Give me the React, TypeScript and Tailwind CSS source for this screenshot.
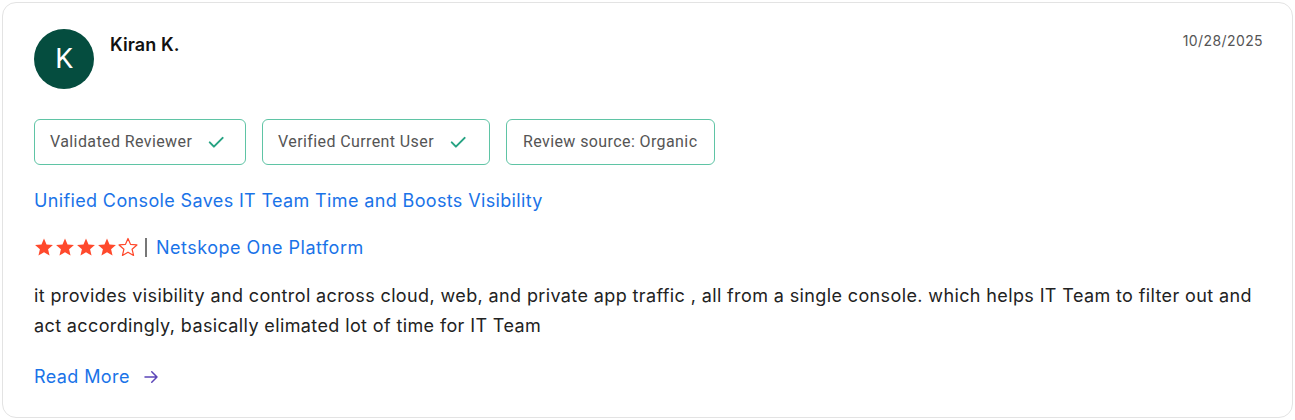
import React from "react";

const Check = () => (
  <svg width="20" height="20" viewBox="0 0 24 24" fill="none" stroke="#27a383" strokeWidth="2.4" strokeLinecap="round" strokeLinejoin="round">
    <path d="M4.5 12.5l5 5L20 7" />
  </svg>
);

const Star = ({ filled }: { filled: boolean }) => (
  <svg width="20" height="20" viewBox="0 0 24 24">
    <path
      d="M12 1.8l3.05 7.05 7.65.7-5.8 5.05 1.75 7.5L12 18.2l-6.65 3.9 1.75-7.5L1.3 9.55l7.65-.7z"
      fill={filled ? "#ff492c" : "none"}
      stroke="#ff492c"
      strokeWidth={filled ? 0 : 1.5}
      strokeLinejoin="round"
    />
  </svg>
);

export default function App() {
  return (
    <div className="w-[1295px] h-[420px] bg-white p-[2px] font-['Inter',sans-serif]">
      <div className="h-[416px] rounded-[14px] border border-[#e3e3e3] bg-white pl-[31px] pr-[29px] pt-[26px]">
        <div className="flex items-start justify-between">
          <div className="flex items-start gap-[16px]">
            <div className="w-[60px] h-[60px] rounded-full bg-[#054d3f] flex items-center justify-center text-white text-[28px] font-['Roboto',sans-serif]">
              K
            </div>
            <div className="pt-[2px] text-[18px] font-semibold text-[#111] tracking-[0.1px]">Kiran K.</div>
          </div>
          <div className="text-[14px] text-[#555] pt-[1px] tracking-[0.4px]">10/28/2025</div>
        </div>

        <div className="flex gap-[16px] mt-[30px] font-['Roboto',sans-serif]">
          <div className="h-[46px] w-[212px] rounded-[6px] border border-[#5fc4a5] flex items-center pl-[15px] gap-[14px] text-[16px] text-[#555] tracking-[0.4px]">
            Validated Reviewer <Check />
          </div>
          <div className="h-[46px] w-[228px] rounded-[6px] border border-[#5fc4a5] flex items-center pl-[15px] gap-[14px] text-[16px] text-[#555] tracking-[0.4px]">
            Verified Current User <Check />
          </div>
          <div className="h-[46px] w-[209px] rounded-[6px] border border-[#5fc4a5] flex items-center pl-[16px] text-[16px] text-[#555] tracking-[0.4px]">
            Review source: Organic
          </div>
        </div>

        <div className="mt-[23px] text-[18px] text-[#1a73e8] leading-[26px] tracking-[0.36px]">
          Unified Console Saves IT Team Time and Boosts Visibility
        </div>

        <div className="mt-[20px] flex items-center h-[26px]">
          <div className="flex gap-[1px]">
            <Star filled />
            <Star filled />
            <Star filled />
            <Star filled />
            <Star filled={false} />
          </div>
          <span className="ml-[7px] w-[2px] h-[19px] bg-[#777]" />
          <span className="ml-[9px] text-[18px] text-[#1a73e8] tracking-[0.5px]">Netskope One Platform</span>
        </div>

        <div className="mt-[21px] text-[18px] leading-[30px] text-[#222] tracking-[0.38px]">
          it provides visibility and control across cloud, web, and private app traffic , all from a single console. which helps IT Team to filter out and act accordingly, basically elimated lot of time for IT Team
        </div>

        <div className="mt-[22px] flex items-center gap-[12px] text-[18px] text-[#1a73e8] tracking-[0.4px]">
          Read More
          <svg width="18" height="18" viewBox="0 0 24 24" fill="none" stroke="#5b45b8" strokeWidth="2" strokeLinecap="round" strokeLinejoin="round">
            <path d="M4 12h16M13 5l7 7-7 7" />
          </svg>
        </div>
      </div>
    </div>
  );
}
